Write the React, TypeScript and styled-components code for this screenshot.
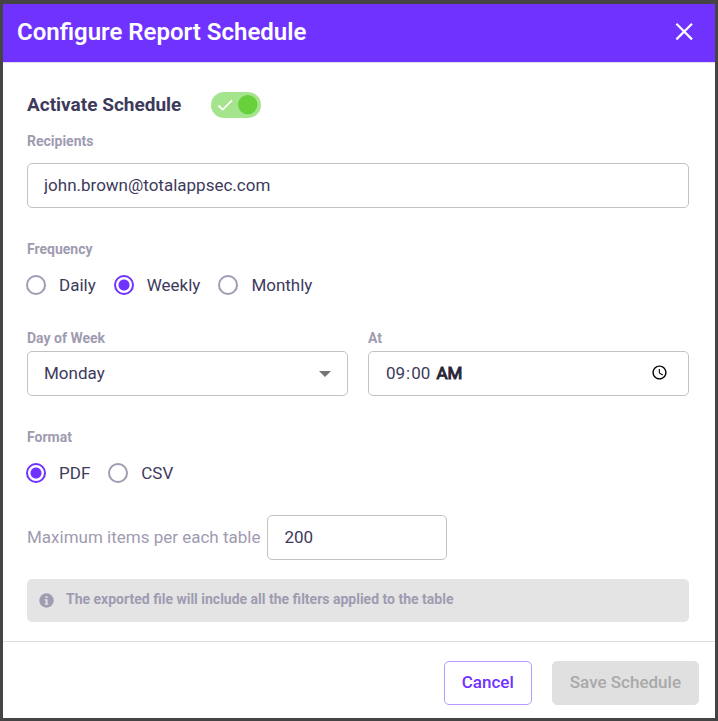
import React, { useState } from "react";
import styled, { createGlobalStyle } from "styled-components";

const ink = "#3d3a5c";
const muted = "#9f9bb1";
const accent = "#6f32ff";
const line = "#c2c2c2";

const GlobalStyle = createGlobalStyle`
  *, *::before, *::after { box-sizing: border-box; }
  html, body { margin: 0; }
  body, button, input, select {
    font-family: Roboto, "Liberation Sans", sans-serif;
  }
  body { color: ${ink}; background: #fff; }
`;

const Dialog = styled.form`
  display: flex;
  flex-direction: column;
  min-height: 100vh;
  background: #fff;
  border: 3px solid #444;
  box-shadow: inset 0 1px 0 #444;
  padding-top: 1px;
`;

const Header = styled.header`
  display: flex;
  align-items: center;
  justify-content: space-between;
  min-height: 59px;
  padding: 0 20px 2px 14px;
  background: ${accent};
  border-bottom: 1px solid #e0dcf2;
  color: #fff;
`;

const Title = styled.h1`
  margin: 0;
  font-size: 24px;
  line-height: 28px;
  font-weight: 600;
`;

const CloseButton = styled.button`
  display: flex;
  padding: 0;
  border: 0;
  background: none;
  color: inherit;
  cursor: pointer;
`;

const Body = styled.main`
  flex: 1;
  padding: 29px 26px 19px 24px;
`;

const ActivateRow = styled.label`
  display: flex;
  align-items: center;
  gap: 30px;
  width: fit-content;
  font-size: 19px;
  line-height: 24px;
  font-weight: 700;
`;

const Switch = styled.span`
  display: grid;
  width: 50px;
  height: 26px;

  > * { grid-area: 1 / 1; }
  svg { pointer-events: none; z-index: 1; }
`;

const SwitchInput = styled.input`
  appearance: none;
  margin: 0;
  border-radius: 13px;
  background: #c9c9d2;
  cursor: pointer;
  &:checked { background: #a4e48c; }
`;

const Group = styled.div<{ $top: number; $gap: number }>`
  display: flex;
  flex-direction: column;
  min-width: 0;
  gap: ${(p) => p.$gap}px;
  margin-top: ${(p) => p.$top}px;
`;

const FieldLabel = styled.label`
  color: ${muted};
  font-size: 14px;
  line-height: 16px;
  font-weight: 700;
`;

const Columns = styled.div`
  display: grid;
  grid-template-columns: 1fr 1fr;
  gap: 20px;
`;

const TextInput = styled.input`
  width: 100%;
  height: 45px;
  padding: 0 16px 2px;
  border: 1px solid ${line};
  border-radius: 5px;
  background: #fff;
  color: ${ink};
  font-size: 17px;
`;

const TimeInput = styled(TextInput)`
  &::-webkit-datetime-edit-ampm-field {
    margin-left: 2px;
    color: #29263a;
    -webkit-text-stroke: 1px #29263a;
  }
`;

const SelectWrap = styled.div`
  display: grid;
  align-items: center;
  > * { grid-area: 1 / 1; }
  svg { justify-self: end; margin-right: 17px; pointer-events: none; }
`;

const Select = styled.select`
  appearance: none;
  width: 100%;
  height: 45px;
  padding: 0 40px 2px 16px;
  border: 1px solid ${line};
  border-radius: 5px;
  background: #fff;
  color: ${ink};
  font-size: 17px;
`;

const RadioRow = styled.div`
  display: flex;
  gap: 18px;
  margin-left: -1px;
`;

const RadioLabel = styled.label`
  display: flex;
  align-items: center;
  gap: 13px;
  font-size: 17px;
  line-height: 20px;
`;

const Radio = styled.input`
  appearance: none;
  width: 20px;
  height: 20px;
  margin: 0;
  border: 2px solid ${muted};
  border-radius: 50%;
  background: #fff;
  &:checked {
    border-color: ${accent};
    background: radial-gradient(circle, ${accent} 5px, #fff 6px);
  }
`;

const MaxRow = styled.div`
  display: flex;
  align-items: center;
  gap: 7px;
  margin-top: 32px;
  color: ${muted};
  font-size: 17px;

  label { padding-bottom: 2px; }
`;

const CountInput = styled(TextInput)`
  width: 180px;
`;

const Note = styled.p`
  display: flex;
  align-items: center;
  gap: 12px;
  min-height: 43px;
  margin: 19px 0 0;
  padding: 0 12px 3px;
  border-radius: 5px;
  background: #e4e4e4;
  color: ${muted};
  font-size: 14px;
  font-weight: 700;
  svg { flex: none; margin-top: 2px; }
`;

const Footer = styled.footer`
  display: flex;
  justify-content: flex-end;
  gap: 20px;
  padding: 19px 16px 13px;
  border-top: 1px solid #dedede;
`;

const Button = styled.button<{ $outlined?: boolean }>`
  height: 44px;
  padding: 0 17px 2px;
  border: 1px solid ${(p) => (p.$outlined ? "#b799ff" : "#e0e0e0")};
  border-radius: 5px;
  background: ${(p) => (p.$outlined ? "#fff" : "#e0e0e0")};
  color: ${(p) => (p.$outlined ? accent : "#a9a9a9")};
  font-size: 17px;
  font-weight: 500;
`;

interface ChoiceProps {
  name: string;
  label: string;
  options: string[];
  initial: string;
  top: number;
}

function Choice({ name, label, options, initial, top }: ChoiceProps) {
  const [value, setValue] = useState(initial);
  return (
    <Group $top={top} $gap={18} role="radiogroup" aria-labelledby={`${name}-label`}>
      <FieldLabel as="span" id={`${name}-label`}>{label}</FieldLabel>
      <RadioRow>
        {options.map((o) => (
          <RadioLabel key={o}>
            <Radio type="radio" name={name} checked={value === o} onChange={() => setValue(o)} />
            {o}
          </RadioLabel>
        ))}
      </RadioRow>
    </Group>
  );
}

export default function App() {
  const [active, setActive] = useState(true);
  return (
    <>
      <GlobalStyle />
      <Dialog onSubmit={(e) => e.preventDefault()}>
        <Header>
          <Title>Configure Report Schedule</Title>
          <CloseButton type="button" aria-label="Close">
            <svg width="22" height="22" viewBox="0 0 22 22" fill="none" stroke="currentColor" strokeWidth="2.2">
              <path d="M3.4 2.8 19 18.4M19 2.8 3.4 18.4" />
            </svg>
          </CloseButton>
        </Header>
        <Body>
          <ActivateRow>
            Activate Schedule
            <Switch>
              <SwitchInput type="checkbox" role="switch" checked={active} onChange={(e) => setActive(e.target.checked)} />
              <svg width="50" height="26" viewBox="0 0 50 26" fill="none">
                {active && <path d="M7.5 13.5 11.7 17.6 21 8.4" stroke="#fff" strokeWidth="1.8" />}
                <circle cx={active ? 36.7 : 13} cy="12.6" r="9.7" fill={active ? "#67d03a" : "#fff"} />
              </svg>
            </Switch>
          </ActivateRow>

          <Group $top={15} $gap={14}>
            <FieldLabel htmlFor="recipients">Recipients</FieldLabel>
            <TextInput id="recipients" type="text" defaultValue="john.brown@totalappsec.com" />
          </Group>

          <Choice name="frequency" label="Frequency" options={["Daily", "Weekly", "Monthly"]} initial="Weekly" top={33} />

          <Columns>
            <Group $top={35} $gap={5}>
              <FieldLabel htmlFor="day">Day of Week</FieldLabel>
              <SelectWrap>
                <Select id="day" defaultValue="Monday">
                  {["Monday", "Tuesday", "Wednesday", "Thursday", "Friday", "Saturday", "Sunday"].map((d) => (
                    <option key={d}>{d}</option>
                  ))}
                </Select>
                <svg width="12" height="6" viewBox="0 0 12 6" fill="#757575">
                  <path d="M0 0H12L6 6Z" />
                </svg>
              </SelectWrap>
            </Group>
            <Group $top={35} $gap={5}>
              <FieldLabel htmlFor="time">At</FieldLabel>
              <TimeInput id="time" type="time" defaultValue="09:00" />
            </Group>
          </Columns>

          <Choice name="format" label="Format" options={["PDF", "CSV"]} initial="PDF" top={33} />

          <MaxRow>
            <label htmlFor="max">Maximum items per each table</label>
            <CountInput id="max" type="text" inputMode="numeric" defaultValue="200" />
          </MaxRow>

          <Note>
            <svg width="15" height="15" viewBox="0 0 15 15">
              <circle cx="7.5" cy="7.5" r="7.2" fill={muted} />
              <path d="M6.5 3.2h2v1.7h-2zM5.7 6.2h2.8v4.2h.9v1.3H5.7v-1.3h.9V7.5h-.9z" fill="#e4e4e4" />
            </svg>
            The exported file will include all the filters applied to the table
          </Note>
        </Body>
        <Footer>
          <Button type="button" $outlined>Cancel</Button>
          <Button type="submit" disabled>Save Schedule</Button>
        </Footer>
      </Dialog>
    </>
  );
}
